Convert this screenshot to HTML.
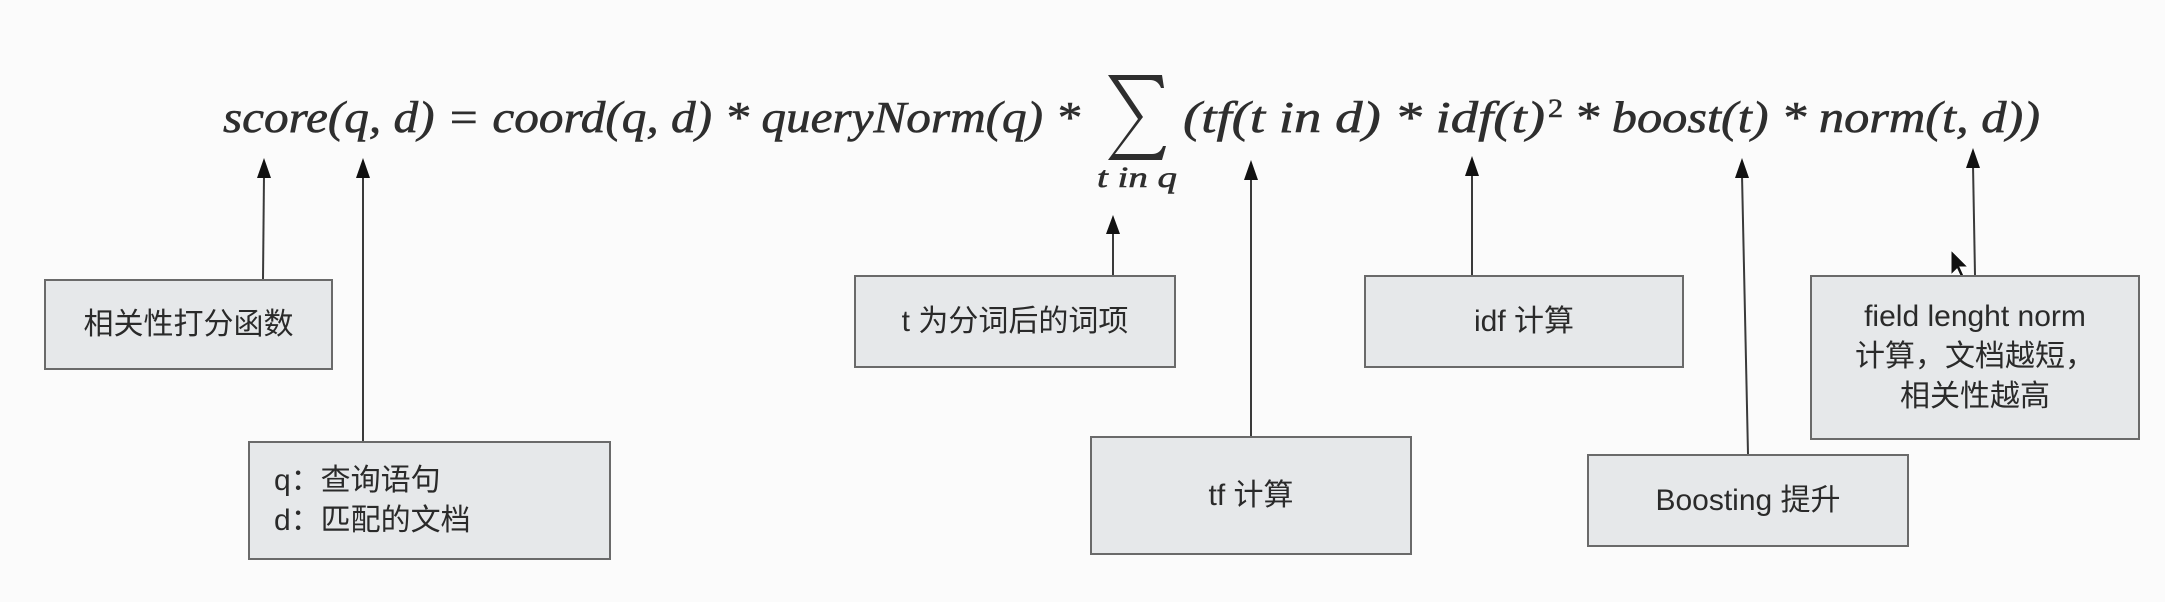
<!DOCTYPE html>
<html><head><meta charset="utf-8"><style>
html,body{margin:0;padding:0;background:#fbfbfb;}
body{width:2165px;height:602px;position:relative;overflow:hidden;font-family:"Liberation Sans","Noto Sans CJK SC",sans-serif;color:#2a2a2a;}
.b{position:absolute;box-sizing:border-box;background:#e6e8ea;border:2px solid #6a6a6a;display:flex;align-items:center;justify-content:center;text-align:center;font-size:30px;line-height:40px;}
</style></head><body>
<svg width="2165" height="602" style="position:absolute;left:0;top:0">
<g font-family="Liberation Serif, DejaVu Serif, serif" font-style="italic" fill="#2e2e2e" stroke="#2e2e2e" stroke-width="0.6" font-size="44">
<text x="223" y="132" textLength="857" lengthAdjust="spacingAndGlyphs">score(q, d) = coord(q, d) * queryNorm(q) *</text>
<text x="1183" y="132" textLength="362" lengthAdjust="spacingAndGlyphs">(tf(t in d) * idf(t)</text>
<text x="1548" y="117" font-size="26" font-style="normal" textLength="15" lengthAdjust="spacingAndGlyphs">2</text>
<text x="1574" y="132" textLength="466" lengthAdjust="spacingAndGlyphs">* boost(t) * norm(t, d))</text>
<text x="1097" y="187" font-size="30" textLength="80" lengthAdjust="spacingAndGlyphs">t in q</text>
</g>
<path d="M1108,75 L1162,75 L1164,88 L1161,88 Q1158,80 1150,80 L1118,80 L1143,117 L1115,154 L1152,154 Q1160,154 1163,146 L1166,146 L1162,160 L1108,160 L1138,119 Z" fill="#2e2e2e"/>
<g stroke="#3a3a3a" stroke-width="2" fill="none">
<line x1="264" y1="175" x2="263" y2="279"/>
<line x1="363" y1="175" x2="363" y2="441"/>
<line x1="1113" y1="232" x2="1113" y2="275"/>
<line x1="1251" y1="177" x2="1251" y2="436"/>
<line x1="1472" y1="173" x2="1472" y2="275"/>
<line x1="1742" y1="175" x2="1748" y2="454"/>
<line x1="1973" y1="165" x2="1975" y2="275"/>
</g>
<g fill="#111">
<polygon points="264,158 257,178 271,178"/>
<polygon points="363,158 356,178 370,178"/>
<polygon points="1113,215 1106,234 1120,234"/>
<polygon points="1251,160 1244,180 1258,180"/>
<polygon points="1472,156 1465,176 1479,176"/>
<polygon points="1742,158 1735,178 1749,178"/>
<polygon points="1973,148 1966,168 1980,168"/>
<polygon points="1951,250 1951,275 1957,269 1962,280 1965,278 1960,267 1968,267" stroke="#fff" stroke-width="1"/>
</g>
</svg>
<div class="b" style="left:44px;top:279px;width:289px;height:91px;">相关性打分函数</div>
<div class="b" style="left:248px;top:441px;width:363px;height:119px;justify-content:flex-start;text-align:left;padding-left:24px;">q：查询语句<br>d：匹配的文档</div>
<div class="b" style="left:854px;top:275px;width:322px;height:93px;">t 为分词后的词项</div>
<div class="b" style="left:1090px;top:436px;width:322px;height:119px;">tf 计算</div>
<div class="b" style="left:1364px;top:275px;width:320px;height:93px;">idf 计算</div>
<div class="b" style="left:1587px;top:454px;width:322px;height:93px;">Boosting 提升</div>
<div class="b" style="left:1810px;top:275px;width:330px;height:165px;align-items:flex-start;padding-top:20px;line-height:40px;">field lenght norm<br>计算，文档越短，<br>相关性越高</div>
</body></html>
